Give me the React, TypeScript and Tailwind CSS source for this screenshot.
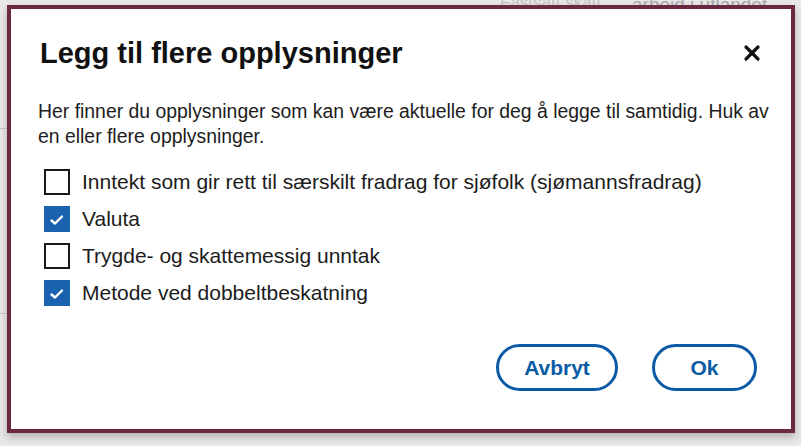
import { X } from "lucide-react";

const items = [
  { label: "Inntekt som gir rett til særskilt fradrag for sjøfolk (sjømannsfradrag)", checked: false },
  { label: "Valuta", checked: true },
  { label: "Trygde- og skattemessig unntak", checked: false },
  { label: "Metode ved dobbeltbeskatning", checked: true },
];

function Checkbox({ checked }: { checked: boolean }) {
  if (checked) {
    return (
      <span className="flex h-[26px] w-[26px] shrink-0 items-center justify-center bg-[#1a62b0]">
        <svg width="16" height="13" viewBox="0 0 16 13" fill="none">
          <path d="M2.5 7.5 L6 10.5 L13 3.5" stroke="#fff" strokeWidth="2.4" strokeLinecap="round" strokeLinejoin="round" />
        </svg>
      </span>
    );
  }
  return <span className="h-[26px] w-[26px] shrink-0 border-2 border-[#1a1a1a] bg-white" />;
}

export default function App() {
  return (
    <div
      className="relative h-[446px] w-[801px] overflow-hidden bg-[#e9e9e9] text-[#111]"
      style={{ fontFamily: '"Liberation Sans", Arial, sans-serif' }}
    >
      {/* faded page behind the dialog */}
      <div className="absolute left-[500px] top-[-10px] text-[17px] text-[#c4c4c4]">Fastsatt skatt</div>
      <div className="absolute left-[632px] top-[-9px] text-[19px] text-[#a9a9a9]">arbeid i utlandet</div>
      <div className="absolute left-[0px] top-[128px] h-px w-[8px] bg-[#c8c8c8]" />
      <div className="absolute left-[0px] top-[313px] h-px w-[8px] bg-[#c8c8c8]" />

      <div className="absolute left-[7px] top-[5px] flex h-[428px] w-[788px] flex-col border-4 border-[#6c2842] bg-white shadow-[0_4px_8px_rgba(0,0,0,0.25)]">
        <div className="flex items-center justify-between pl-[29px] pr-[27px] pt-[28px]">
          <h2 className="text-[29px] font-bold leading-[32px] text-[#111]">Legg til flere opplysninger</h2>
          <X className="h-[24px] w-[24px] text-[#111]" strokeWidth={3.2} />
        </div>

        <p className="mt-[30px] pl-[27px] pr-[18px] text-[19.4px] leading-[25px] text-[#1c1c1c]">
          Her finner du opplysninger som kan være aktuelle for deg å legge til samtidig. Huk av en eller flere
          opplysninger.
        </p>

        <div className="mt-[20px] flex flex-col gap-[11px] pl-[33px]">
          {items.map((it) => (
            <label key={it.label} className="flex items-center gap-[12px]">
              <Checkbox checked={it.checked} />
              <span className="text-[21px] leading-[26px] text-[#1c1c1c]">{it.label}</span>
            </label>
          ))}
        </div>

        <div className="mt-auto flex justify-end gap-[34px] pb-[38px] pr-[34px]">
          <button className="h-[47px] w-[122px] rounded-full border-[3px] border-[#0b5aa5] text-[21px] font-bold text-[#0b5aa5]">
            Avbryt
          </button>
          <button className="h-[47px] w-[105px] rounded-full border-[3px] border-[#0b5aa5] text-[21px] font-bold text-[#0b5aa5]">
            Ok
          </button>
        </div>
      </div>
    </div>
  );
}
